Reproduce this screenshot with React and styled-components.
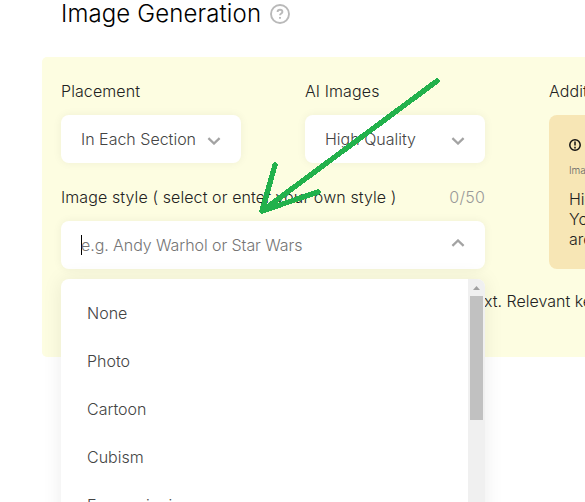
import React from 'react';
import styled, { createGlobalStyle } from 'styled-components';

const styles = ['None', 'Photo', 'Cartoon', 'Cubism', 'Expressionism'];

const Chevron = ({ up }) => (
  <ChevronIcon viewBox="0 0 14 8" $up={up}>
    <path d={up ? 'M1.4 6.9 7 1.5l5.6 5.4' : 'M1.4 1.1 7 6.5l5.6-5.4'} />
  </ChevronIcon>
);

const Select = ({ value }) => (
  <Control>
    <Value>{value}</Value>
    <Chevron />
  </Control>
);

const App = () => (
  <Page>
    <GlobalStyle />
    <Header>
      <Title>Image Generation</Title>
      <HelpIcon viewBox="0 0 20 20">
        <circle cx="10" cy="10" r="9" />
        <path d="M7.6 8.1c0-1.4 1-2.3 2.4-2.3s2.4.9 2.4 2.1c0 1.6-2.4 1.7-2.4 3.4" />
        <path d="M10 13v1.8" />
      </HelpIcon>
    </Header>
    <Panel>
      <Fields>
        <Field>
          <Label>Placement</Label>
          <Select value="In Each Section" />
        </Field>
        <Field>
          <Label>AI Images</Label>
          <Select value="High Quality" />
        </Field>
        <StyleField>
          <LabelRow>
            <Label>Image style ( select or enter your own style )</Label>
            <Counter>0/50</Counter>
          </LabelRow>
          <Control>
            <Caret />
            <Placeholder>e.g. Andy Warhol or Star Wars</Placeholder>
            <Chevron up />
          </Control>
          <Menu>
            <Options>
              {styles.map(name => (
                <Option key={name}>{name}</Option>
              ))}
            </Options>
            <Scrollbar>
              <ScrollUp viewBox="0 0 7 4">
                <path d="M0 4 3.5 0 7 4z" />
              </ScrollUp>
              <Thumb />
            </Scrollbar>
          </Menu>
        </StyleField>
        <InfoField>
          <Label>Additional</Label>
          <InfoCard>
            <InfoIcon viewBox="0 0 12 12">
              <circle cx="6" cy="6" r="5.2" />
              <path d="M6 2.6v4M6 7.8v1.6" />
            </InfoIcon>
            <InfoCaption>Images</InfoCaption>
            <InfoText>
              High
              <br />
              You
              <br />
              are
            </InfoText>
          </InfoCard>
        </InfoField>
      </Fields>
      <Note>xt. Relevant keywords</Note>
    </Panel>
    <Arrow viewBox="0 0 180 136">
      <path d="M177 3 2 133M15 87 2 133l56-19" />
    </Arrow>
  </Page>
);

export default App;

const GlobalStyle = createGlobalStyle`
  * {
    box-sizing: border-box;
  }

  body {
    margin: 0;
    background: #fff;
    font-family: Inter, "Liberation Sans", sans-serif;
    font-size: 16px;
    font-weight: 300;
    color: #222;
  }
`;

const Page = styled.div`
  position: relative;
  height: 502px;
  padding-left: 42px;
  overflow: hidden;
`;

const Header = styled.header`
  display: flex;
  align-items: center;
  gap: 9px;
  height: 57px;
  padding: 1px 0 30px 19px;
`;

const Title = styled.h1`
  margin: 0;
  font-size: 24px;
  font-weight: 300;
  line-height: 26px;
  letter-spacing: 0.12px;
  color: #000;
`;

const HelpIcon = styled.svg`
  width: 20px;
  height: 20px;
  fill: none;
  stroke: #b9b9b9;
  stroke-width: 1.9;
`;

const Panel = styled.section`
  height: 300px;
  padding: 24px 0 0 19px;
  border-radius: 5px 0 0 5px;
  background: #fdfde1;
`;

const Fields = styled.div`
  display: grid;
  grid-template-columns: 180px 180px 180px;
  grid-template-rows: 82px 106px;
  column-gap: 64px;
  row-gap: 24px;
  height: 188px;
`;

const Field = styled.div`
  display: flex;
  flex-direction: column;
  gap: 14px;
`;

const StyleField = styled(Field)`
  position: relative;
  grid-column: 1 / 3;
  grid-row: 2;
`;

const InfoField = styled(Field)`
  grid-column: 3;
  grid-row: 1 / 3;
`;

const LabelRow = styled.div`
  display: flex;
  justify-content: space-between;
`;

const Label = styled.div`
  line-height: 20px;
  letter-spacing: 0.1px;
  white-space: nowrap;
`;

const Counter = styled.span`
  line-height: 20px;
  letter-spacing: 0.2px;
  color: #999;
`;

const Control = styled.div`
  display: flex;
  flex: none;
  align-items: center;
  height: 48px;
  padding: 0 20px;
  border-radius: 8px;
  background: #fff;
  box-shadow: 0 0 10px rgba(0, 0, 0, 0.06);
`;

const Value = styled.span`
  flex: 1;
  white-space: nowrap;
  color: #444;
`;

const Placeholder = styled(Value)`
  letter-spacing: -0.07px;
  color: #757575;
`;

const Caret = styled.i`
  width: 1px;
  height: 20px;
  margin-right: -1px;
  background: #000;
`;

const ChevronIcon = styled.svg`
  flex: none;
  width: 14px;
  height: 8px;
  margin-top: ${({ $up }) => ($up ? '-4px' : '3px')};
  fill: none;
  stroke: #a3a3a3;
  stroke-width: 2.3;
`;

const Menu = styled.div`
  position: absolute;
  top: 92px;
  left: 0;
  z-index: 1;
  display: flex;
  width: 424px;
  height: 260px;
  border-radius: 8px;
  background: #fff;
  box-shadow: 0 0 20px rgba(0, 0, 0, 0.08);
  overflow: hidden;
`;

const Options = styled.ul`
  flex: 1;
  margin: 0;
  padding: 10px 26px;
  list-style: none;
`;

const Option = styled.li`
  height: 48px;
  line-height: 48px;
  color: #444;
`;

const Scrollbar = styled.div`
  display: flex;
  flex-direction: column;
  align-items: center;
  gap: 6px;
  width: 17px;
  padding-top: 7px;
  background: #f0f0f0;
`;

const ScrollUp = styled.svg`
  width: 7px;
  height: 4px;
  fill: #a0a0a0;
`;

const Thumb = styled.div`
  width: 13px;
  height: 124px;
  background: #c1c1c1;
`;

const InfoCard = styled.div`
  height: 154px;
  padding: 24px 20px;
  border-radius: 8px;
  background: #f7e6b5;
`;

const InfoIcon = styled.svg`
  display: block;
  width: 12px;
  height: 12px;
  fill: none;
  stroke: #111;
  stroke-width: 1.5;
`;

const InfoCaption = styled.div`
  margin-top: 13px;
  font-size: 10px;
  line-height: 12px;
  color: #666;
`;

const InfoText = styled.div`
  margin-top: 13px;
  line-height: 20px;
`;

const Note = styled.p`
  margin: 22px 0 0 423px;
  line-height: 20px;
  white-space: nowrap;
`;

const Arrow = styled.svg`
  position: absolute;
  top: 78px;
  left: 260px;
  z-index: 2;
  width: 180px;
  height: 136px;
  fill: none;
  stroke: #22b14c;
  stroke-width: 5.3;
  stroke-linecap: round;
  stroke-linejoin: round;
  shape-rendering: crispEdges;
  overflow: visible;
`;
